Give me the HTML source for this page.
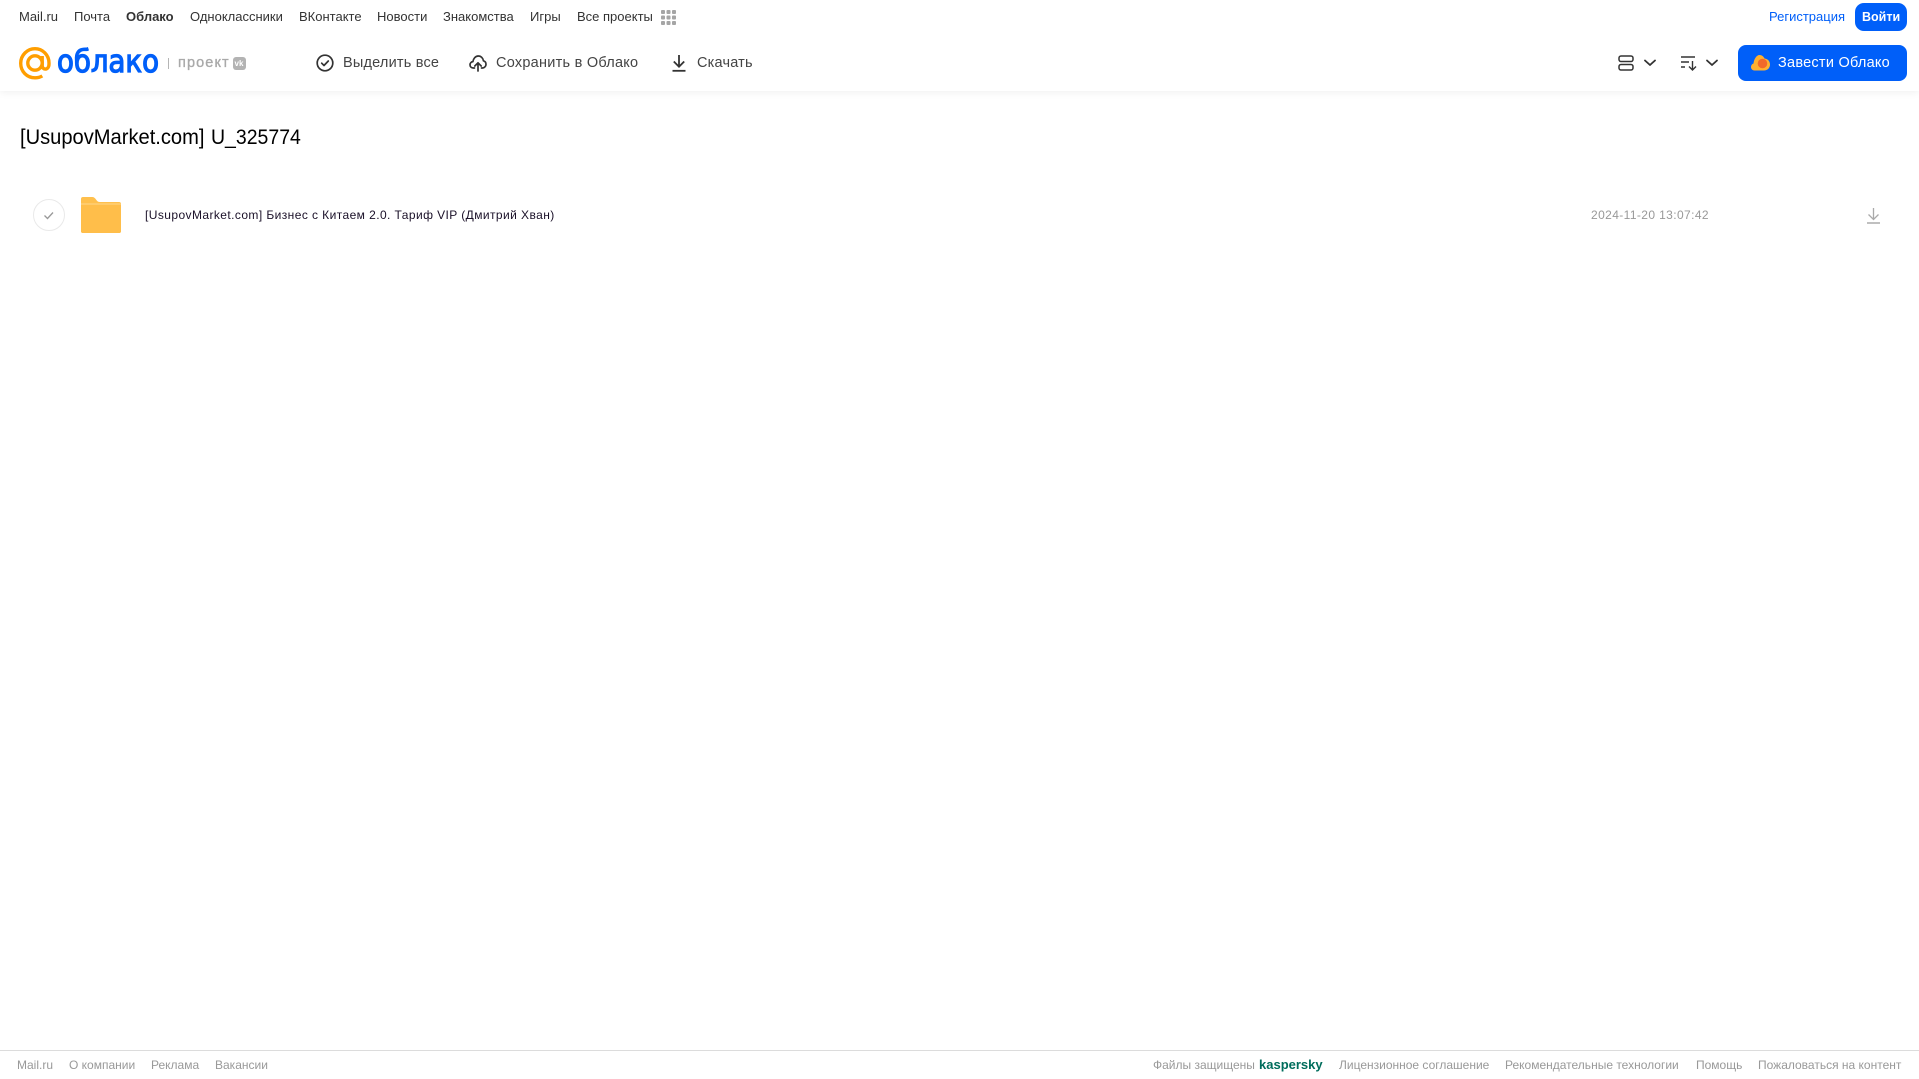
<!DOCTYPE html>
<html lang="ru"><head><meta charset="utf-8"><title>Облако</title>
<style>
html,body{margin:0;padding:0;background:#fff;width:1919px;height:1079px;overflow:hidden}
body{font-family:"Liberation Sans",Arial,sans-serif;position:relative}
.t{position:absolute;white-space:nowrap;line-height:20px}
.n{top:7px;font-size:13px;color:#333}
.b{top:53px;font-size:14.5px;color:#444;letter-spacing:.2px}
.f{top:1055px;font-size:12px;color:#999}
svg{position:absolute;overflow:visible}
#hd{position:absolute;left:0;top:0;width:1919px;height:91px;background:#fff;box-shadow:0 1px 8px rgba(0,0,0,.07)}
</style></head><body>
<div id="hd"></div>
<span class="t n" style="left:19px">Mail.ru</span>
<span class="t n" style="left:74px">Почта</span>
<span class="t n" style="left:126px;font-weight:700">Облако</span>
<span class="t n" style="left:190px">Одноклассники</span>
<span class="t n" style="left:299px">ВКонтакте</span>
<span class="t n" style="left:377px">Новости</span>
<span class="t n" style="left:443px">Знакомства</span>
<span class="t n" style="left:530px">Игры</span>
<span class="t n" style="left:577px">Все проекты</span>
<svg style="left:661px;top:10px" width="15" height="15" fill="#a5a5a5"><rect x="0" y="0" width="4" height="4" rx="1"/><rect x="5.500" y="0" width="4" height="4" rx="1"/><rect x="11" y="0" width="4" height="4" rx="1"/><rect x="0" y="5.500" width="4" height="4" rx="1"/><rect x="5.500" y="5.500" width="4" height="4" rx="1"/><rect x="11" y="5.500" width="4" height="4" rx="1"/><rect x="0" y="11" width="4" height="4" rx="1"/><rect x="5.500" y="11" width="4" height="4" rx="1"/><rect x="11" y="11" width="4" height="4" rx="1"/></svg>
<span class="t n" style="left:1769px;color:#005ff9">Регистрация</span>
<div style="position:absolute;left:1855px;top:3px;width:52px;height:28px;border-radius:9px;background:#005ff9"></div>
<span class="t n" style="left:1862px;color:#fff;font-weight:700;font-size:12.500px">Войти</span>

<svg style="left:19px;top:47px" width="32" height="33" viewBox="0 0 32 33" fill="none" stroke="#ff9e00" stroke-width="3.400"><circle cx="16" cy="16" r="7.200"/><path d="M23.200 9v9.500c0 5 6.800 5 6.800-1.500V16C30 8 23.500 1.700 16 1.700S1.700 8 1.700 16.300 8 30.800 16 30.800c3.200 0 5.300-.7 7.300-1.900"/></svg>
<span class="t" style="left:57px;top:44px;line-height:36px;font-size:31px;color:#005ff9;font-family:'DejaVu Sans',sans-serif;-webkit-text-stroke:1.300px #005ff9;transform-origin:0 50%;transform:scaleX(.89)">облако</span>
<div style="position:absolute;left:168px;top:58px;width:1px;height:11px;background:#b5b5b5"></div>
<span class="t" style="left:178px;top:53px;font-size:14.500px;color:#a9a9a9;letter-spacing:1.100px;-webkit-text-stroke:.35px #a9a9a9">проект</span>
<div style="position:absolute;left:233px;top:57px;width:13px;height:13px;border-radius:3px;background:#b3b3b3"></div>
<span class="t" style="left:234.500px;top:58px;font-size:8px;line-height:11px;font-weight:700;color:#fff">vk</span>

<svg style="left:316px;top:54px" width="18" height="18" fill="none" stroke="#333" stroke-width="1.700"><circle cx="9" cy="9" r="7.800"/><path d="M5.700 9.200l2.300 2.300 4.300-4.500" stroke-linecap="round" stroke-linejoin="round"/></svg>
<span class="t b" style="left:343px">Выделить все</span>
<svg style="left:469px;top:54px" width="18" height="18" fill="none" stroke="#333" stroke-width="1.700" stroke-linecap="round" stroke-linejoin="round"><path d="M5.500 14H4.300C2.300 14 1 12.500 1 10.800c0-1.700 1.200-3 2.900-3.200C4.400 4.500 6.400 2 9.300 2c2.800 0 4.800 2.200 5.100 4.800 1.600.4 2.600 1.800 2.600 3.400 0 2-1.500 3.800-3.500 3.800h-1"/><path d="M9 17V9M5.800 12L9 8.800 12.200 12"/></svg>
<span class="t b" style="left:496px;letter-spacing:.25px">Сохранить в Облако</span>
<svg style="left:672px;top:54px" width="14" height="18" fill="none" stroke="#333" stroke-width="1.800"><path d="M7 1v11M1.800 7.500L7 12.700l5.200-5.200"/><path d="M.500 16.800h13"/></svg>
<span class="t b" style="left:697px">Скачать</span>

<svg style="left:1618px;top:55px" width="16" height="16" fill="none" stroke="#333" stroke-width="1.500"><rect x="1" y="1" width="14" height="5.500" rx="2"/><rect x="1" y="9.500" width="14" height="5.500" rx="2"/></svg>
<svg style="left:1644px;top:59px" width="12" height="8" fill="none" stroke="#333" stroke-width="1.800" stroke-linecap="round" stroke-linejoin="round"><path d="M1 1.500l5 4.500 5-4.500"/></svg>
<svg style="left:1681px;top:55px" width="16" height="16" fill="none" stroke="#333" stroke-width="1.400"><path d="M0 2h14M0 7h8M0 12h4"/><path d="M11.500 6v9M8 11.500l3.500 3.500 3.500-3.500"/></svg>
<svg style="left:1706px;top:59px" width="12" height="8" fill="none" stroke="#333" stroke-width="1.800" stroke-linecap="round" stroke-linejoin="round"><path d="M1 1.500l5 4.500 5-4.500"/></svg>

<div style="position:absolute;left:1738px;top:45px;width:169px;height:36px;border-radius:8px;background:#005ff9"></div>
<svg style="left:1751px;top:55px" width="19" height="16"><path d="M3.500 15.500C1.500 15.500 0 14 0 12c0-1.700 1-3 2.500-3.500C3 4 5.500 0 8.500 0c2.500 0 4 1.500 5 3.500 3 .3 5.500 2.500 5.500 6 0 3.500-2.500 6-6 6z" fill="#ffb030"/><circle cx="11.500" cy="8.500" r="4.800" fill="#f2692a"/></svg>
<span class="t" style="left:1778px;top:53px;font-size:14.500px;color:#fff;letter-spacing:.25px">Завести Облако</span>

<span class="t" style="left:20px;top:125px;line-height:26px;font-size:21px;color:#000;transform-origin:0 50%;transform:scaleX(.958)">[UsupovMarket.com]</span>
<span class="t" style="left:210.500px;top:125px;line-height:26px;font-size:21px;color:#000;transform-origin:0 50%;transform:scaleX(.927)">U_325774</span>

<svg style="left:33px;top:199px" width="32" height="32" fill="none"><circle cx="16" cy="16" r="15.500" stroke="#e9e9e9"/><path d="M11.500 16.500l3 3 5.500-6" stroke="#999" stroke-width="1.300"/></svg>
<svg style="left:81px;top:197px" width="40" height="36"><path d="M2 0h9c2 0 3 1 4 2.500S17 5 19 5h19a2 2 0 0 1 2 2v27a2 2 0 0 1-2 2H2a2 2 0 0 1-2-2V2a2 2 0 0 1 2-2z" fill="#ffc04d"/><path d="M0 7.500h40V34a2 2 0 0 1-2 2H2a2 2 0 0 1-2-2z" fill="#ffbe4a"/><path d="M0 6h40v2H0z" fill="#ffcb6b"/></svg>
<span class="t" style="left:145px;top:205px;font-size:12px;letter-spacing:.42px;color:#1a1028">[UsupovMarket.com] Бизнес с Китаем 2.0. Тариф VIP (Дмитрий Хван)</span>
<span class="t" style="left:1591px;top:205px;font-size:12px;letter-spacing:.39px;color:#999">2024-11-20 13:07:42</span>
<svg style="left:1866px;top:207px" width="15" height="17" fill="none" stroke="#aaa" stroke-width="1.300"><path d="M7.500 1v11M2.500 7.500l5 5 5-5"/><path d="M1 16h13" stroke-width="1.500"/></svg>

<div style="position:absolute;left:0;top:1050px;width:1919px;height:1px;background:#dcdcdc"></div>
<span class="t f" style="left:17px">Mail.ru</span>
<span class="t f" style="left:69px">О компании</span>
<span class="t f" style="left:151px">Реклама</span>
<span class="t f" style="left:215px">Вакансии</span>
<span class="t f" style="left:1153px">Файлы защищены</span>
<span class="t f" style="left:1259px;font-weight:700;color:#006d5c;font-size:13px">kaspersky</span>
<span class="t f" style="left:1339px">Лицензионное соглашение</span>
<span class="t f" style="left:1505px">Рекомендательные технологии</span>
<span class="t f" style="left:1696px">Помощь</span>
<span class="t f" style="left:1758px">Пожаловаться на контент</span>
</body></html>
